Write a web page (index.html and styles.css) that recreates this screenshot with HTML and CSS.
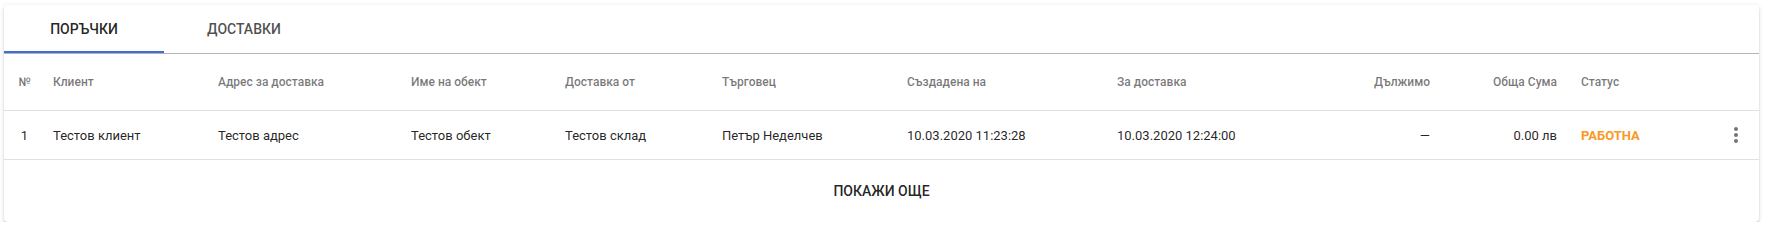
FILE: index.html
```html
<!DOCTYPE html>
<html lang="bg">
<head>
    <meta charset="UTF-8">
    <meta name="viewport" content="width=device-width, initial-scale=1.0">
    <title>Поръчки</title>
    <link rel="stylesheet" href="styles.css">
</head>
<body>
    <div class="page">
        <div class="card">
            <div class="tabs">
                <div class="tab active">Поръчки</div>
                <div class="tab">Доставки</div>
            </div>

            <table class="orders">
                <colgroup>
                    <col class="c-num">
                    <col class="c-client">
                    <col class="c-address">
                    <col class="c-site">
                    <col class="c-from">
                    <col class="c-trader">
                    <col class="c-created">
                    <col class="c-delivery">
                    <col class="c-due">
                    <col class="c-total">
                    <col class="c-status">
                    <col class="c-actions">
                </colgroup>
                <thead>
                    <tr>
                        <th class="num">№</th>
                        <th>Клиент</th>
                        <th>Адрес за доставка</th>
                        <th>Име на обект</th>
                        <th>Доставка от</th>
                        <th>Търговец</th>
                        <th>Създадена на</th>
                        <th>За доставка</th>
                        <th class="right">Дължимо</th>
                        <th class="right">Обща Сума</th>
                        <th>Статус</th>
                        <th></th>
                    </tr>
                </thead>
                <tbody>
                    <tr>
                        <td class="num">1</td>
                        <td>Тестов клиент</td>
                        <td>Тестов адрес</td>
                        <td>Тестов обект</td>
                        <td>Тестов склад</td>
                        <td>Петър Неделчев</td>
                        <td>10.03.2020 11:23:28</td>
                        <td>10.03.2020 12:24:00</td>
                        <td class="right">—</td>
                        <td class="right">0.00 лв</td>
                        <td><span class="status working">Работна</span></td>
                        <td class="actions">
                            <button class="icon-btn" title="Още">
                                <svg viewBox="0 0 24 24" width="24" height="24">
                                    <path fill="currentColor" d="M12 8c1.1 0 2-.9 2-2s-.9-2-2-2-2 .9-2 2 .9 2 2 2zm0 2c-1.1 0-2 .9-2 2s.9 2 2 2 2-.9 2-2-.9-2-2-2zm0 6c-1.1 0-2 .9-2 2s.9 2 2 2 2-.9 2-2-.9-2-2-2z"/>
                                </svg>
                            </button>
                        </td>
                    </tr>
                </tbody>
            </table>

            <div class="more">
                <button class="more-btn">Покажи още</button>
            </div>
        </div>
    </div>
</body>
</html>
```

FILE: styles.css
```css
body {
    margin: 0;
    background: #ffffff;
    font-family: Roboto, 'Liberation Sans', sans-serif;
    color: rgba(0, 0, 0, 0.87);
}

.page {
    padding: 5px 9px 0 4px;
}

.card {
    background: #ffffff;
    border-radius: 4px;
    box-shadow: 0 3px 1px -2px rgba(0, 0, 0, 0.2), 0 2px 2px 0 rgba(0, 0, 0, 0.14), 0 1px 5px 0 rgba(0, 0, 0, 0.12);
    overflow: hidden;
}

/* tabs */
.tabs {
    display: flex;
    height: 48px;
    border-bottom: 1px solid #b4b4b4;
}

.tab {
    width: 160px;
    display: flex;
    align-items: center;
    justify-content: center;
    font-size: 14px;
    font-weight: 500;
    text-transform: uppercase;
    color: rgba(0, 0, 0, 0.7);
    cursor: pointer;
}

.tab.active {
    color: rgba(0, 0, 0, 0.87);
    box-shadow: inset 0 -2px 0 #3b6fd9;
}

/* table */
.orders {
    width: 100%;
    border-collapse: collapse;
    table-layout: fixed;
}

.c-num { width: 37px; }
.c-client { width: 165px; }
.c-address { width: 193px; }
.c-site { width: 154px; }
.c-from { width: 157px; }
.c-trader { width: 185px; }
.c-created { width: 210px; }
.c-delivery { width: 229px; }
.c-due { width: 108px; }
.c-total { width: 127px; }
.c-status { width: 125px; }
.c-actions { width: 65px; }

.orders th,
.orders td {
    padding: 0 12px;
    text-align: left;
    white-space: nowrap;
    vertical-align: middle;
}

.orders th {
    height: 56px;
    font-size: 12px;
    font-weight: 500;
    color: rgba(0, 0, 0, 0.54);
}

.orders td {
    height: 48px;
    font-size: 13px;
}

.orders tr {
    border-bottom: 1px solid rgba(0, 0, 0, 0.12);
}

.orders .num {
    padding: 0 0 0 4px;
    text-align: center;
}

.orders .right {
    text-align: right;
}

.orders .actions {
    padding: 0 11px 0 0;
    text-align: right;
}

.status {
    font-weight: 700;
    text-transform: uppercase;
}

.status.working {
    color: #f89a23;
}

.icon-btn {
    border: none;
    background: none;
    padding: 0;
    width: 24px;
    height: 24px;
    color: rgba(0, 0, 0, 0.54);
    cursor: pointer;
    vertical-align: middle;
}

.icon-btn svg {
    display: block;
}

/* footer */
.more {
    height: 62px;
    display: flex;
    align-items: center;
    justify-content: center;
}

.more-btn {
    border: none;
    background: none;
    font-family: inherit;
    font-size: 14px;
    font-weight: 500;
    text-transform: uppercase;
    color: rgba(0, 0, 0, 0.87);
    padding: 0 16px;
    height: 36px;
    cursor: pointer;
}
```
